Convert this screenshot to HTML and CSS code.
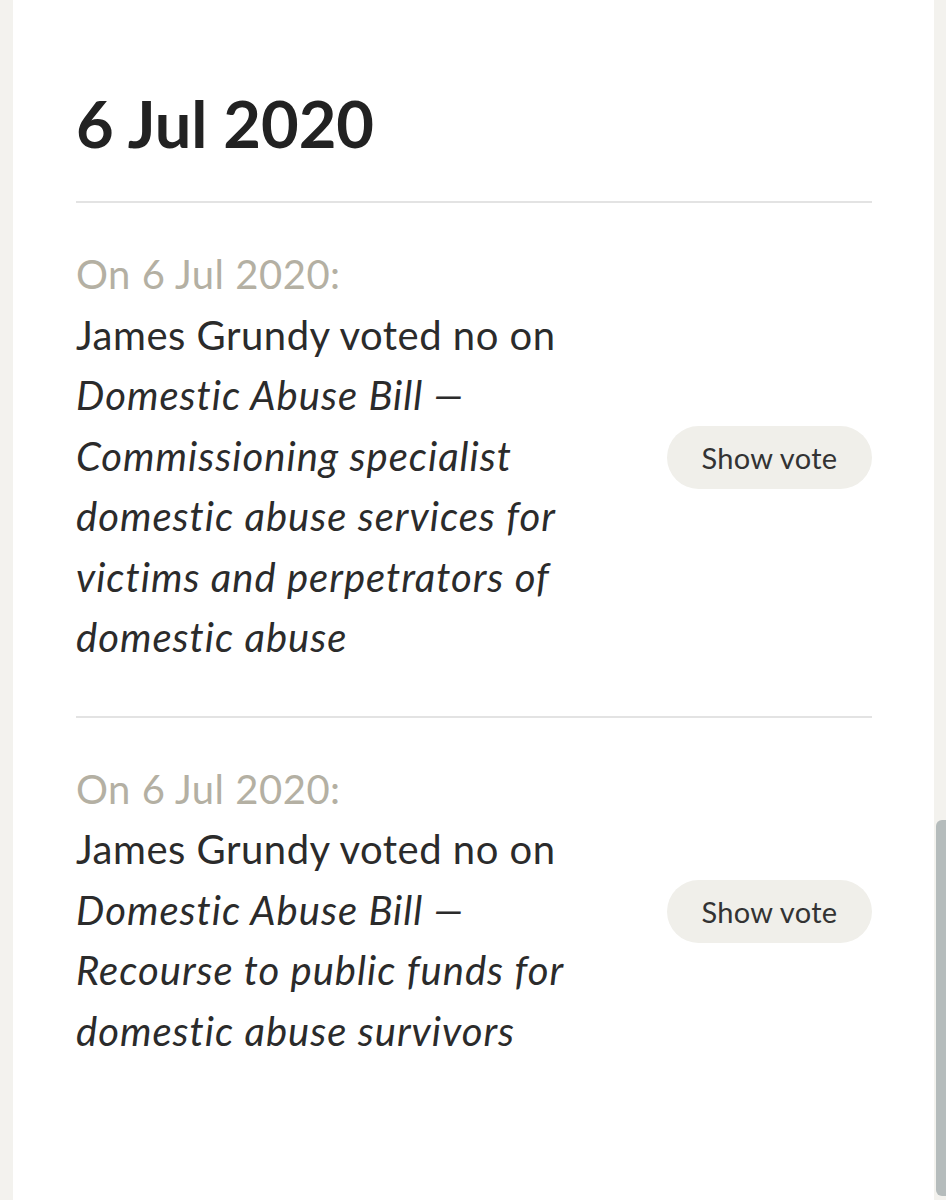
FILE: index.html
```html
<!DOCTYPE html>
<html lang="en">

<head>
    <meta charset="UTF-8">
    <meta name="viewport" content="width=device-width, initial-scale=1.0">
    <title>Votes</title>
    <link rel="stylesheet" href="styles.css">
</head>

<body>
    <div class="page">
        <section class="card">
            <h2 class="day">6 Jul 2020</h2>

            <div class="vote">
                <div class="vote-text">
                    <p class="when">On 6 Jul 2020:</p>
                    <p class="what">James Grundy voted no on
                        <em>Domestic Abuse Bill — Commissioning specialist domestic abuse services for victims and
                            perpetrators of domestic abuse</em></p>
                </div>
                <button type="button" class="show">Show vote</button>
            </div>

            <div class="vote">
                <div class="vote-text">
                    <p class="when">On 6 Jul 2020:</p>
                    <p class="what">James Grundy voted no on
                        <em>Domestic Abuse Bill — Recourse to public funds for domestic abuse survivors</em></p>
                </div>
                <button type="button" class="show">Show vote</button>
            </div>
        </section>
    </div>

    <div class="scroll-thumb"></div>
</body>

</html>
```

FILE: styles.css
```css
* {
    box-sizing: border-box;
}

body {
    margin: 0;
    padding: 0;
    background-color: #f3f2ee;
    font-family: "Lato", "Liberation Sans", sans-serif;
    color: #2b2b2b;
    overflow: hidden;
}

.page {
    padding-left: 13px;
    width: 934px;
}

.card {
    background-color: #fff;
    min-height: 1200px;
    padding: 83px 62px 0 63px;
}

.day {
    margin: 0;
    font-size: 65px;
    font-weight: 700;
    line-height: 80px;
    color: #222;
    padding-bottom: 38px;
    border-bottom: 2px solid #e3e3e3;
}

.vote {
    display: flex;
    justify-content: space-between;
    align-items: center;
    padding: 41px 0 48px;
    border-bottom: 2px solid #e3e3e3;
}

.vote:last-child {
    border-bottom: none;
}

.vote-text {
    width: 500px;
}

.vote p {
    margin: 0;
    font-size: 40px;
    letter-spacing: 0.5px;
    line-height: 60.5px;
}

.when {
    color: #b4b0a3;
}

.what em {
    font-style: italic;
    letter-spacing: 1px;
}

.show {
    border: none;
    background-color: #f0efea;
    color: #333;
    font-family: inherit;
    font-size: 29px;
    letter-spacing: 0.3px;
    border-radius: 32px;
    width: 205px;
    height: 63px;
    padding: 0;
    margin-top: 4px;
    cursor: pointer;
}

.scroll-thumb {
    position: fixed;
    left: 936px;
    top: 820px;
    width: 10px;
    height: 376px;
    border-radius: 6px 0 0 6px;
    background-color: #b5bcbc;
}
```
